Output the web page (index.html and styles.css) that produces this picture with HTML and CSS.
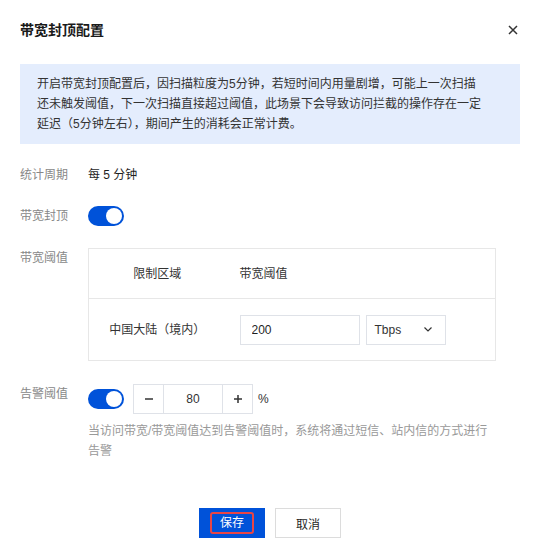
FILE: index.html
```html
<!DOCTYPE html>
<html lang="zh-CN">
<head>
    <meta charset="UTF-8">
    <meta name="viewport" content="width=device-width, initial-scale=1.0">
    <title>带宽封顶配置</title>
    <link rel="stylesheet" href="styles.css">
</head>
<body>
    <div class="dialog">
        <div class="dialog-header">
            <div class="dialog-title">带宽封顶配置</div>
            <span class="dialog-close">
                <svg width="10" height="10" viewBox="0 0 10 10">
                    <path d="M1 1L9 9M9 1L1 9" stroke="#333" stroke-width="1.5" fill="none"/>
                </svg>
            </span>
        </div>

        <div class="notice">开启带宽封顶配置后，因扫描粒度为5分钟，若短时间内用量剧增，可能上一次扫描还未触发阈值，下一次扫描直接超过阈值，此场景下会导致访问拦截的操作存在一定延迟（5分钟左右），期间产生的消耗会正常计费。</div>

        <div class="form">
            <div class="form-row">
                <div class="form-label">统计周期</div>
                <div class="form-control">每 5 分钟</div>
            </div>
            <div class="form-row">
                <div class="form-label">带宽封顶</div>
                <div class="form-control">
                    <span class="switch"></span>
                </div>
            </div>
            <div class="form-row">
                <div class="form-label">带宽阈值</div>
                <div class="form-control">
                    <table class="limit-table">
                        <thead>
                            <tr>
                                <th class="col-region">限制区域</th>
                                <th class="col-value">带宽阈值</th>
                            </tr>
                        </thead>
                        <tbody>
                            <tr>
                                <td class="col-region">中国大陆（境内）</td>
                                <td class="col-value">
                                    <div class="value-group">
                                        <input class="text-input" type="text" value="200">
                                        <div class="select">
                                            <span>Tbps</span>
                                            <svg width="8" height="5" viewBox="0 0 8 5">
                                                <path d="M0.5 0.5L4 4L7.5 0.5" stroke="#333" stroke-width="1.2" fill="none"/>
                                            </svg>
                                        </div>
                                    </div>
                                </td>
                            </tr>
                        </tbody>
                    </table>
                </div>
            </div>
            <div class="form-row">
                <div class="form-label">告警阈值</div>
                <div class="form-control">
                    <div class="alarm-line">
                        <span class="switch"></span>
                        <div class="stepper">
                            <span class="stepper-btn">
                                <svg width="8" height="8" viewBox="0 0 8 8">
                                    <path d="M0 4H8" stroke="#333" stroke-width="1.5"/>
                                </svg>
                            </span>
                            <span class="stepper-value">80</span>
                            <span class="stepper-btn">
                                <svg width="8" height="8" viewBox="0 0 8 8">
                                    <path d="M0 4H8M4 0V8" stroke="#333" stroke-width="1.5"/>
                                </svg>
                            </span>
                        </div>
                        <span class="unit">%</span>
                    </div>
                    <div class="help">当访问带宽/带宽阈值达到告警阈值时，系统将通过短信、站内信的方式进行告警</div>
                </div>
            </div>
        </div>

        <div class="dialog-footer">
            <button class="btn btn-primary"><span class="btn-mark">保存</span></button>
            <button class="btn">取消</button>
        </div>
    </div>
</body>
</html>
```

FILE: styles.css
```css
* {
    margin: 0;
    padding: 0;
    box-sizing: border-box;
}

body {
    font-family: "Liberation Sans", "Noto Sans CJK SC", sans-serif;
    font-size: 12px;
    color: #1f1f1f;
    background-color: #fff;
}

.dialog {
    padding: 0 22px 0 20px;
}

.dialog-header {
    display: flex;
    justify-content: space-between;
    align-items: center;
    padding-top: 20px;
}

.dialog-title {
    font-size: 14px;
    line-height: 20px;
    font-weight: bold;
    color: #1a1a1a;
}

.dialog-close {
    display: flex;
    margin-right: 2px;
}

.notice {
    margin-top: 24px;
    padding: 10px 35px 10px 17px;
    background-color: #e4edfd;
    line-height: 20px;
    color: #333;
}

.form {
    margin-top: 21px;
}

.form-row {
    display: flex;
}

.form-row + .form-row {
    margin-top: 21px;
}

.form-row:nth-child(3) {
    margin-top: 22px;
}

.form-row:nth-child(4) {
    margin-top: 23px;
}

.form-label {
    width: 68px;
    flex-shrink: 0;
    line-height: 20px;
    color: #888;
}

.form-control {
    width: 408px;
    line-height: 20px;
}

.switch {
    display: block;
    position: relative;
    width: 36px;
    height: 20px;
    border-radius: 10px;
    background-color: #0052d9;
}

.switch::after {
    content: "";
    position: absolute;
    top: 2px;
    right: 2px;
    width: 16px;
    height: 16px;
    border-radius: 50%;
    background-color: #fff;
}

.limit-table {
    width: 408px;
    border-collapse: collapse;
    border: 1px solid #e7e7e7;
    font-size: 12px;
}

.limit-table th {
    height: 50px;
    font-weight: normal;
    color: #333;
    border-bottom: 1px solid #e7e7e7;
}

.limit-table td {
    height: 62px;
    color: #333;
}

.col-region {
    width: 137px;
    text-align: center;
}

.col-value {
    text-align: left;
    padding-left: 14px;
}

.value-group {
    display: flex;
    gap: 6px;
}

.text-input {
    width: 120px;
    height: 30px;
    padding: 0 11px;
    border: 1px solid #dfe2e8;
    font-family: inherit;
    font-size: 12px;
    color: #1f1f1f;
    outline: none;
}

.select {
    display: flex;
    justify-content: space-between;
    align-items: center;
    width: 80px;
    height: 30px;
    padding: 0 13px 0 8px;
    border: 1px solid #dfe2e8;
    color: #333;
}

.alarm-line {
    display: flex;
    align-items: center;
}

.stepper {
    display: flex;
    height: 30px;
    margin-left: 9px;
    border: 1px solid #dfe2e8;
}

.stepper-btn {
    display: flex;
    align-items: center;
    justify-content: center;
    width: 29px;
}

.stepper-value {
    width: 60px;
    line-height: 28px;
    text-align: center;
    border-left: 1px solid #dfe2e8;
    border-right: 1px solid #dfe2e8;
    color: #333;
}

.unit {
    margin-left: 5px;
    color: #333;
}

.help {
    margin-top: 7px;
    line-height: 20px;
    color: #999;
}

.dialog-footer {
    display: flex;
    justify-content: center;
    gap: 10px;
    margin-top: 47px;
}

.btn {
    width: 66px;
    height: 30px;
    border: 1px solid #dcdcdc;
    background-color: #fff;
    font-family: inherit;
    font-size: 12px;
    color: #1f1f1f;
}

.btn-primary {
    border-color: #0052d9;
    background-color: #0052d9;
    color: #fff;
}

.btn-mark {
    display: inline-block;
    padding: 0 8px;
    line-height: 18px;
    border: 2px solid #e84545;
    border-radius: 3px;
}
```
